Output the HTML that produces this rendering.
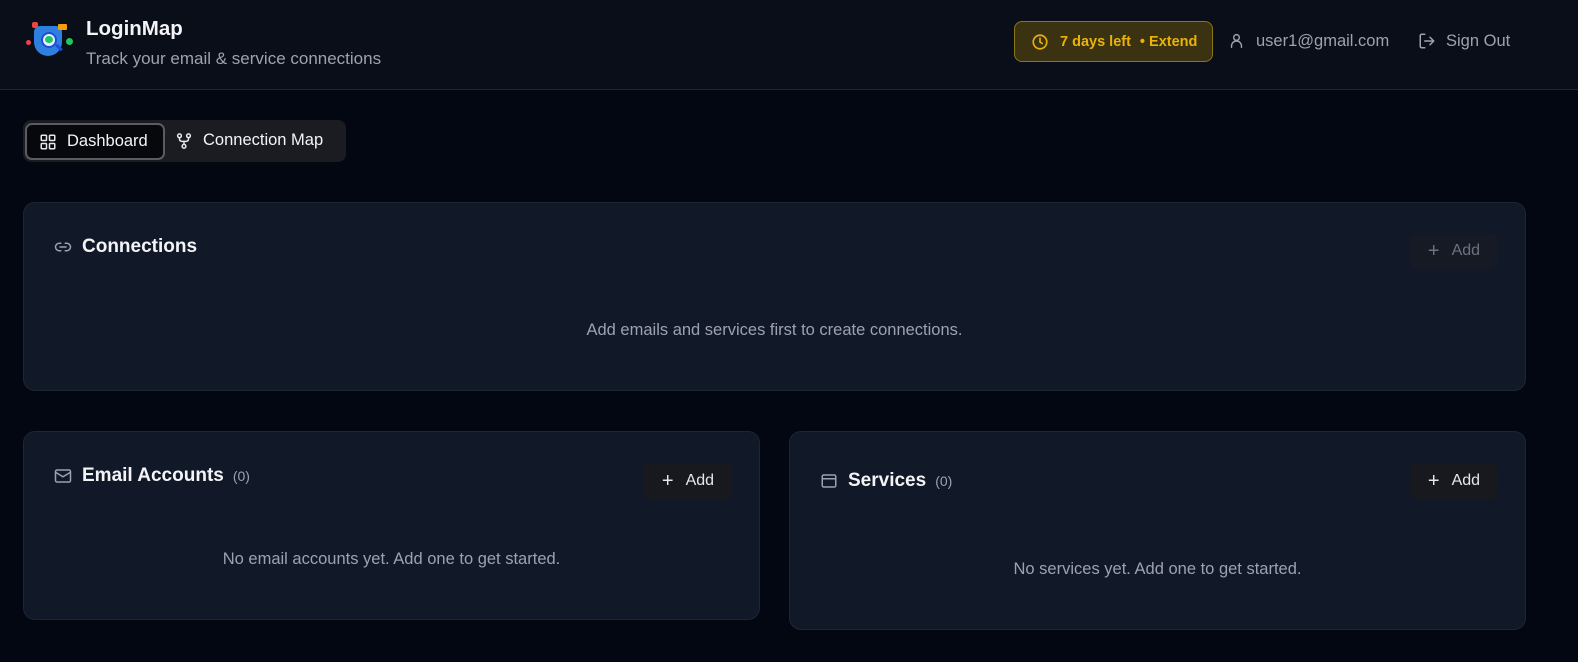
<!DOCTYPE html>
<html><head><meta charset="utf-8"><style>
*{box-sizing:border-box;margin:0;padding:0}
body{width:1578px;height:662px;background:#030712;font-family:"Liberation Sans",sans-serif;color:#f3f4f6;position:relative;overflow:hidden}
.hdr{position:absolute;left:0;top:0;width:1578px;height:90px;background:#0a0e18;border-bottom:1px solid #1f2430}
.abs{position:absolute}
.card{position:absolute;background:#111827;border:1px solid #1e2533;border-radius:12px}
.ttl{font-size:19px;font-weight:bold;color:#f3f4f6}
.cnt{font-size:14px;color:#9ca3af;margin-left:9px;font-weight:normal}
.add{position:absolute;width:88px;height:36px;background:#17191f;border-radius:6px;font-size:16px;color:#e5e7eb;display:flex;align-items:center;justify-content:center;gap:12px}
.empty{position:absolute;font-size:16.5px;color:#9ca3af;text-align:center;left:0;right:0}
svg{display:block}
</style></head><body>
<div class="hdr">
  <div class="abs" style="left:24px;top:18px;width:52px;height:40px">
    <div class="abs" style="left:10px;top:8px;width:28px;height:30px;background:#2f7fe0;border-radius:6px 6px 14px 14px"></div>
    <div class="abs" style="left:17px;top:14px;width:16px;height:16px;border-radius:50%;background:#dff3ff;border:2px solid #1d4ed8"></div>
    <div class="abs" style="left:21px;top:18px;width:8px;height:7px;background:#22c55e;border-radius:50%"></div>
    <div class="abs" style="left:31px;top:28px;width:8px;height:3px;background:#1d4ed8;transform:rotate(45deg)"></div>
    <div class="abs" style="left:8px;top:4px;width:6px;height:6px;background:#ef4444;border-radius:2px"></div>
    <div class="abs" style="left:34px;top:6px;width:9px;height:6px;background:#f59e0b;border-radius:1px"></div>
    <div class="abs" style="left:42px;top:20px;width:7px;height:7px;background:#22c55e;border-radius:50%"></div>
    <div class="abs" style="left:2px;top:22px;width:5px;height:5px;background:#ef4444;border-radius:50%"></div>
  </div>
  <div class="abs" style="left:86px;top:17px;font-size:20.5px;font-weight:bold;color:#f3f4f6">LoginMap</div>
  <div class="abs" style="left:86px;top:49px;font-size:17px;color:#9ca3af">Track your email &amp; service connections</div>
  <div class="abs" style="left:1014px;top:21px;width:199px;height:41px;background:#3a3210;border:1px solid #8a7615;border-radius:8px;display:flex;align-items:center;padding-left:16px;color:#eab308;font-size:14.5px;font-weight:bold">
    <svg width="18" height="18" viewBox="0 0 24 24" fill="none" stroke="#eab308" stroke-width="2.2" stroke-linecap="round"><circle cx="12" cy="12" r="9"/><path d="M12 7v5l3 2"/></svg>
    <span style="margin-left:11px">7 days left</span><span style="margin-left:9px;font-weight:bold">• Extend</span>
  </div>
  <svg class="abs" style="left:1228px;top:32px" width="17" height="18" viewBox="0 0 24 24" fill="none" stroke="#9ca3af" stroke-width="2" stroke-linecap="round"><circle cx="12" cy="7" r="4"/><path d="M5 21v-2a6 6 0 0 1 14 0v2"/></svg>
  <div class="abs" style="left:1256px;top:32px;font-size:16.5px;color:#9ca3af">user1@gmail.com</div>
  <svg class="abs" style="left:1418px;top:32px" width="18" height="18" viewBox="0 0 24 24" fill="none" stroke="#9ca3af" stroke-width="2" stroke-linecap="round" stroke-linejoin="round"><path d="M9 21H5a2 2 0 0 1-2-2V5a2 2 0 0 1 2-2h4"/><path d="M16 17l5-5-5-5M21 12H9"/></svg>
  <div class="abs" style="left:1446px;top:32px;font-size:16.5px;color:#9ca3af">Sign Out</div>
</div>

<div class="abs" style="left:23px;top:120px;width:323px;height:42px;background:#1a1c22;border-radius:8px"></div>
<div class="abs" style="left:25px;top:123px;width:140px;height:37px;background:#07080b;border:2px solid #5a5c63;border-radius:7px;display:flex;align-items:center;padding-left:12px;font-size:16.5px;color:#f3f4f6">
  <svg width="18" height="18" viewBox="0 0 24 24" fill="none" stroke="#e5e7eb" stroke-width="2"><rect x="3" y="3" width="7" height="7" rx="1"/><rect x="14" y="3" width="7" height="7" rx="1"/><rect x="3" y="14" width="7" height="7" rx="1"/><rect x="14" y="14" width="7" height="7" rx="1"/></svg>
  <span style="margin-left:10px">Dashboard</span>
</div>
<div class="abs" style="left:175px;top:131px;display:flex;align-items:center;font-size:16.5px;color:#f3f4f6">
  <svg width="18" height="18" viewBox="0 0 24 24" fill="none" stroke="#e5e7eb" stroke-width="2"><circle cx="6" cy="5" r="2.5"/><circle cx="18" cy="5" r="2.5"/><circle cx="12" cy="19" r="2.5"/><path d="M6 7.5v2a3 3 0 0 0 3 3h6a3 3 0 0 0 3-3v-2M12 12.5v4"/></svg>
  <span style="margin-left:10px">Connection Map</span>
</div>

<div class="card" style="left:23px;top:202px;width:1503px;height:189px">
  <div class="abs" style="left:30px;top:33px;display:flex;align-items:center">
    <svg width="18" height="18" viewBox="0 0 24 24" fill="none" stroke="#9ca3af" stroke-width="2" stroke-linecap="round"><path d="M9 17H7a5 5 0 0 1 0-10h2M15 7h2a5 5 0 0 1 0 10h-2M8 12h8"/></svg>
    <span class="ttl" style="margin-left:10px">Connections</span>
  </div>
  <div class="add" style="left:1386px;top:30px;background:#151a25;color:#6b7280"><span style="font-size:20px">+</span><span>Add</span></div>
  <div class="empty" style="top:118px">Add emails and services first to create connections.</div>
</div>

<div class="card" style="left:23px;top:431px;width:737px;height:189px">
  <div class="abs" style="left:30px;top:33px;display:flex;align-items:center">
    <svg width="18" height="18" viewBox="0 0 24 24" fill="none" stroke="#9ca3af" stroke-width="2"><rect x="2" y="4" width="20" height="16" rx="2"/><path d="M2 7l10 6 10-6"/></svg>
    <span class="ttl" style="margin-left:10px">Email Accounts</span><span class="cnt">(0)</span>
  </div>
  <div class="add" style="left:620px;top:31px"><span style="font-size:20px">+</span><span>Add</span></div>
  <div class="empty" style="top:118px">No email accounts yet. Add one to get started.</div>
</div>

<div class="card" style="left:789px;top:431px;width:737px;height:199px">
  <div class="abs" style="left:30px;top:38px;display:flex;align-items:center">
    <svg width="18" height="18" viewBox="0 0 24 24" fill="none" stroke="#9ca3af" stroke-width="2"><rect x="3" y="4" width="18" height="16" rx="2"/><path d="M3 9h18"/></svg>
    <span class="ttl" style="margin-left:10px">Services</span><span class="cnt">(0)</span>
  </div>
  <div class="add" style="left:620px;top:31px"><span style="font-size:20px">+</span><span>Add</span></div>
  <div class="empty" style="top:128px">No services yet. Add one to get started.</div>
</div>
</body></html>
